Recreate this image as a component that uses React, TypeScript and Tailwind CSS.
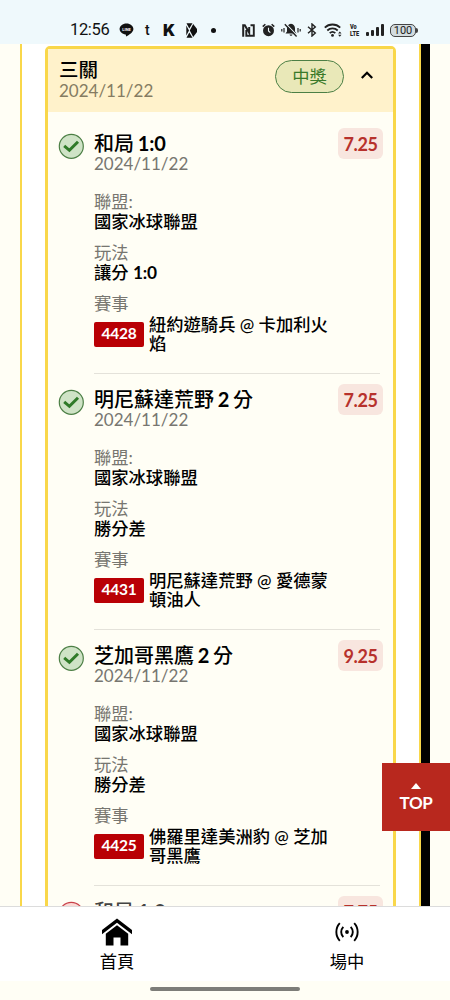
import { useState } from 'react';
import clsx from 'clsx';

type Leg = {
  id: number;
  title: string;
  odds: string;
  won: boolean;
  play?: string;
  code?: string;
  match?: string[];
};

const DATE = '2024/11/22';

const legs: Leg[] = [
  {
    id: 1,
    title: '和局 1:0',
    odds: '7.25',
    play: '讓分 1:0',
    code: '4428',
    match: ['紐約遊騎兵 @ 卡加利火', '焰'],
    won: true,
  },
  {
    id: 2,
    title: '明尼蘇達荒野 2 分',
    odds: '7.25',
    play: '勝分差',
    code: '4431',
    match: ['明尼蘇達荒野 @ 愛德蒙', '頓油人'],
    won: true,
  },
  {
    id: 3,
    title: '芝加哥黑鷹 2 分',
    odds: '9.25',
    play: '勝分差',
    code: '4425',
    match: ['佛羅里達美洲豹 @ 芝加', '哥黑鷹'],
    won: true,
  },
  { id: 4, title: '和局 1:0', odds: '7.75', won: false },
];

// Scores and margins are set bolder than the Chinese text around them
function Mixed({ text }: { text: string }) {
  return (
    <>
      {text.split(/([\d:]+)/).map((part, i) =>
        /^\d/.test(part) ? (
          <span key={i} className="tracking-[-0.2px] font-bold">
            {part}
          </span>
        ) : (
          part
        ),
      )}
    </>
  );
}

function StatusBar() {
  return (
    <header className="relative z-10 h-[44px] shrink-0 bg-[#eff9fc] pt-[20px]">
      <div className="flex h-5 items-center text-[#111]">
        <span className="ml-[70px] w-[40px] font-['Roboto'] text-[16.5px] leading-5 tracking-[-0.35px] whitespace-nowrap">
          12:56
        </span>
        {/* LINE */}
        <svg className="ml-[9px]" width="15" height="14" viewBox="0 0 15 14">
          <path
            d="M7.5 0.5C3.6 .5.6 3 .6 6c0 2.800 2.500 4.900 5.900 5.400.700.100.400 1.200.5 2.100C10 12 14.400 9.300 14.400 6c0-3-3-5.500-6.900-5.500z"
            fill="#111"
          />
          <text x="7.5" y="7.700" fontSize="4" fontWeight="700" textAnchor="middle" fill="#fff" fontFamily="Roboto">
            LINE
          </text>
        </svg>
        <span className="ml-[11px] w-[8px] font-['Roboto'] text-[14px] leading-5 font-medium">t</span>
        <span className="ml-[10px] w-[12px] font-['Inter'] text-[16px] leading-5 font-black">K</span>
        <svg className="ml-[11px]" width="11" height="15" viewBox="0 0 11 15">
          <path d="M.5 .3H6.500L3.300 5.500z M.5 14.700H6.500L3.300 9.500z M.3 2.500v10l2.700-5z" fill="#111" />
          <path d="M7.200 1L11 6v3L7.200 14 3.800 7.500z" fill="#111" />
        </svg>
        <span className="ml-[14px] h-[5px] w-[5px] rounded-full bg-[#111]" />

        {/* NFC */}
        <svg className="ml-[26px]" width="13" height="13" viewBox="0 0 13 13" fill="none" stroke="#222">
          <path d="M1.200 12.700V1.200H2.800L7.200 8.800V3" strokeWidth="2" />
          <path d="M8.500 1.300h3.300v10.400H4.300V6" strokeWidth="1.900" />
        </svg>
        {/* alarm */}
        <svg className="ml-[7px]" width="13" height="14" viewBox="0 0 14 14">
          <circle cx="7" cy="7.800" r="5.900" fill="#222" />
          <path d="M.8 3.300L3.600.8M13.200 3.300L10.400.8" stroke="#222" strokeWidth="1.700" />
          <path d="M7 4.500v3.500l2 1.800" stroke="#eff9fc" strokeWidth="1.200" fill="none" />
        </svg>
        {/* muted bell */}
        <svg className="ml-[6px]" width="20" height="14" viewBox="0 0 20 14">
          <path
            d="M10 .8c-2.800.5-4 2.300-4 4.700v3L4.500 10.500h11L14 8.500v-3C14 3.100 12.800 1.300 10 .8zM8.500 11.500h3c-.3 1.800-2.700 1.800-3 0z"
            fill="#222"
          />
          <path d="M5 1l12 12.300" stroke="#eff9fc" strokeWidth="1.200" />
          <path d="M3.800 1.300l11.800 12.200" stroke="#222" strokeWidth="1.400" />
          <path d="M.8 6v2.500M3 5v4.500M17 5v4.500M19.200 6v2.500" stroke="#222" strokeWidth="1.200" />
        </svg>
        {/* bluetooth */}
        <svg className="ml-[6px]" width="10" height="14" viewBox="0 0 10 14">
          <path d="M1 3.800l7.300 6.200L5 13V1l3.300 3L1 10.200" stroke="#222" strokeWidth="1.400" fill="none" />
        </svg>
        {/* wifi */}
        <svg className="ml-[7px]" width="18" height="14" viewBox="0 0 18 14">
          <path
            d="M.8 4.700c4.200-4.300 11.200-4.300 15.400 0M3.300 7.500c2.900-2.800 7.500-2.800 10.400 0M5.700 10.200c1.700-1.600 3.900-1.600 5.600 0"
            stroke="#222"
            strokeWidth="1.800"
            fill="none"
          />
          <circle cx="8.500" cy="12.400" r="1.400" fill="#222" />
          <path d="M15.800 8.500l1.700 2h-3.400zM15.800 13.700l1.700-2h-3.400z" fill="#222" />
        </svg>
        <span className="ml-[8px] flex w-[10px] origin-left scale-x-[0.7] flex-col font-['Roboto'] text-[8px] leading-[7px] font-black text-[#222]">
          <span>Vo</span>
          <span>LTE</span>
        </span>
        {/* signal */}
        <span className="ml-[6px] flex h-[12px] items-end gap-[2px]">
          <i className="h-[4px] w-[3px] rounded-[1px] bg-[#222]" />
          <i className="h-[6px] w-[3px] rounded-[1px] bg-[#222]" />
          <i className="h-[9px] w-[3px] rounded-[1px] bg-[#222]" />
          <i className="h-[12px] w-[3px] rounded-[1px] bg-[#222]" />
        </span>
        <span className="ml-[6px] flex h-[13px] w-[26px] items-center justify-center rounded-[5px] border border-[#444] bg-[#d3dcdf] font-['Roboto'] text-[11px] leading-[13px] text-[#222]">
          100
        </span>
        <span className="h-[5px] w-[2px] rounded-r bg-[#444]" />
      </div>
    </header>
  );
}

function StatusIcon({ won }: { won: boolean }) {
  return (
    <svg className="mt-[1px] shrink-0" width="26" height="26" viewBox="0 0 26 26">
      <circle cx="13.300" cy="13.300" r="12" fill={won ? '#cfe3c6' : '#fbd9d5'} stroke={won ? '#4c7f45' : '#c8414a'} strokeWidth="1.200" />
      {won && <path d="M6.200 12.800l5.200 4.500 8.600-8.600" stroke="#2f7a28" strokeWidth="3" fill="none" />}
    </svg>
  );
}

function Field({ label, value }: { label: string; value: string }) {
  return (
    <div className="mb-[11px] text-[17.300px] leading-5">
      <p className="text-[#777670]">{label}</p>
      <p className="font-medium text-black">
        <Mixed text={value} />
      </p>
    </div>
  );
}

function LegRow({ leg }: { leg: Leg }) {
  return (
    <li className="flex h-[256px] pt-[14px] pl-[10px]">
      <StatusIcon won={leg.won} />
      <div className="mr-[13px] ml-[10px] flex-1 border-b border-[#e4e2da]">
        <div className="flex justify-between">
          <div>
            <h3
              className={clsx(
                'text-[20px] leading-[22px] font-medium [word-spacing:-1.2px]',
                leg.won ? 'text-black' : 'text-[#444]',
              )}
            >
              <Mixed text={leg.title} />
            </h3>
            <p className="text-[17px] leading-[20px] text-[#777670]">{DATE}</p>
          </div>
          <span className="-mt-[4px] -mr-[3px] flex h-[31px] w-[45px] items-center justify-center rounded-[6px] bg-[#f8e6df] pt-px text-[18px] font-bold tracking-[-0.4px] text-[#b7312c]">
            {leg.odds}
          </span>
        </div>
        {leg.match && leg.play && (
          <div className="mt-[18px]">
            <Field label="聯盟:" value="國家冰球聯盟" />
            <Field label="玩法" value={leg.play} />
            <p className="text-[17.300px] leading-5 text-[#777670]">賽事</p>
            <div className="flex items-center pt-px">
              <span className="flex h-[25px] w-[50px] items-center justify-center rounded-[2px] bg-[#b90005] text-[15.500px] font-bold tracking-[-0.3px] text-white">
                {leg.code}
              </span>
              <p className="ml-[5px] text-[17.300px] leading-[19px] font-medium whitespace-nowrap text-black">
                {leg.match[0]}
                <br />
                {leg.match[1]}
              </p>
            </div>
          </div>
        )}
      </div>
    </li>
  );
}

function BottomNav() {
  return (
    <nav className="absolute inset-x-0 bottom-0 h-[94px] border-t border-[#dcdcdc] bg-white">
      <div className="flex h-[74px] text-[17.300px] text-black">
        <a className="flex w-[234px] shrink-0 flex-col items-center pt-[11px]">
          <svg width="32" height="28" viewBox="0 0 32 28">
            <path d="M16 0.500L31 12v4.200L16 4.800 1 16.200V12z" />
            <path d="M16 7.200l11.200 8.500V27.500h-7.700v-8h-7v8H4.800V15.700z" />
          </svg>
          <span className="mt-[6px] leading-5">首頁</span>
        </a>
        <a className="ml-[8px] flex w-[210px] shrink-0 flex-col items-center pt-[15px]">
          <svg width="24" height="20" viewBox="0 0 24 20" fill="none" stroke="#000" strokeWidth="1.900">
            <path d="M4.800 1.200c-4.600 5-4.600 12.600 0 17.600M19.200 1.200c4.600 5 4.600 12.600 0 17.600" />
            <path d="M8.300 4.800c-2.800 3-2.800 7.400 0 10.400M15.700 4.800c2.800 3 2.800 7.400 0 10.400" />
            <circle cx="12" cy="10" r="1.900" fill="#000" stroke="none" />
          </svg>
          <span className="mt-[10px] leading-5">場中</span>
        </a>
      </div>
      <div className="flex h-[19px] justify-center bg-[#fffef5] pt-[6px]">
        <span className="h-[4px] w-[150px] rounded-full bg-[#7d7d78]" />
      </div>
    </nav>
  );
}

export default function App() {
  const [open, setOpen] = useState(true);

  return (
    <div className="relative flex h-[1000px] w-[450px] flex-col overflow-hidden bg-[#fffef5] font-['Lato','Noto_Sans_CJK_TC',sans-serif]">
      <StatusBar />

      <main className="ml-[20px] flex h-[862px] w-[410px] overflow-hidden">
        <div className="w-[401px] border-x-[2.500px] border-[#f9d74a] bg-white pt-[2px] pr-[23px] pl-[23px]">
          <section className="rounded-t-[5px] border-[3px] border-[#f9d74a] bg-[#fffef5]">
            <div className="flex h-[63px] bg-[#fff2cb] pl-[11px]">
              <div className="pt-[10px]">
                <h2 className="text-[19.500px] leading-[22px] font-medium text-black">三關</h2>
                <p className="text-[17px] leading-5 text-[#857c62]">{DATE}</p>
              </div>
              <span className="mt-[11px] ml-auto flex h-[33px] w-[69px] items-center justify-center rounded-full border border-[#4c7f45] bg-[#e9e8b8] text-[17.300px] text-[#3a7a2a]">
                中獎
              </span>
              <button className="mr-[19px] ml-[16px] flex h-[52px] items-center" onClick={() => setOpen(!open)}>
                <svg width="14" height="10" viewBox="0 0 14 10">
                  <path d="M1.800 8L7 2.800 12.200 8" stroke="#000" strokeWidth="2.200" fill="none" />
                </svg>
              </button>
            </div>
            {open && (
              <ul className="pt-[6px]">
                {legs.map((leg) => (
                  <LegRow key={leg.id} leg={leg} />
                ))}
              </ul>
            )}
          </section>
        </div>
        <div className="flex-1 bg-black" />
      </main>

      {/* Back to top */}
      <button className="absolute top-[763px] right-0 flex h-[68px] w-[68px] flex-col items-center bg-[#b8281e] text-white">
        <svg className="mt-[20px]" width="10" height="6" viewBox="0 0 10 6">
          <path d="M5 0l5 6H0z" fill="#fff" />
        </svg>
        <span className="mt-[4px] text-[17px] leading-5 font-bold tracking-[-0.3px]">TOP</span>
      </button>

      <BottomNav />
    </div>
  );
}
